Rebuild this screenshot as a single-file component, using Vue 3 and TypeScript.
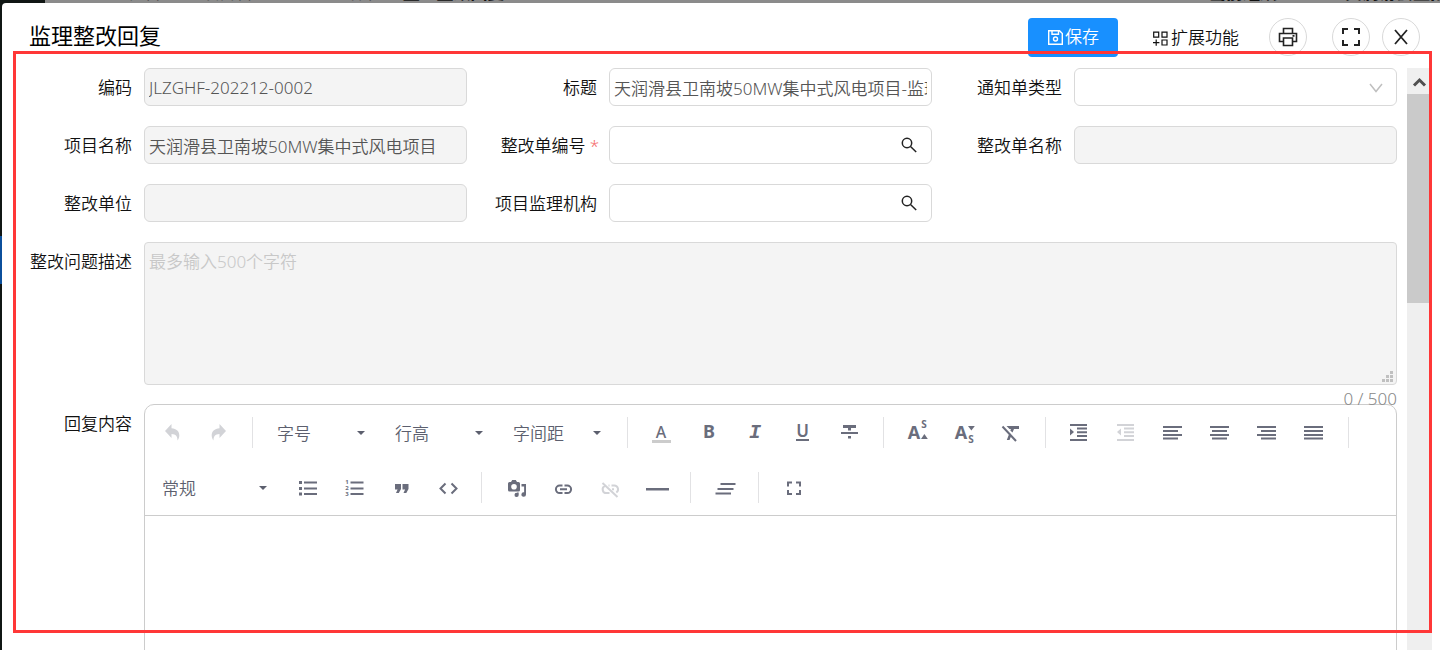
<script setup lang="ts">
import { ref } from 'vue'

interface Glyph { char: string; x: number; y: number; cls: string }
interface Tool {
  kind: 'button' | 'select' | 'divider'
  label?: string
  width?: 'wide' | 'normal'
  disabled?: boolean
  fill?: string
  soft?: string
  stroke?: string
  thick?: number
  glyphs?: Glyph[]
}

const code = ref('JLZGHF-202212-0002')
const title = ref('天润滑县卫南坡50MW集中式风电项目-监理整改回复')
const project = ref('天润滑县卫南坡50MW集中式风电项目')
const noticeType = ref('')
const orderNo = ref('')
const orderName = ref('')
const unit = ref('')
const agency = ref('')
const problem = ref('')

const divider: Tool = { kind: 'divider' }

const firstRow: Tool[] = [
  { kind: 'button', label: '撤销', disabled: true, fill: 'M11.500 3v4.200c5 .3 8 3.300 7.800 7.300 0 2-.8 3.800-1.800 5 .2-4-1.600-6.500-6-6.600v4L5 10z' },
  { kind: 'button', label: '重做', disabled: true, fill: 'M12.500 3v4.200c-5 .3-8 3.300-7.800 7.300 0 2 .8 3.800 1.800 5-.2-4 1.600-6.500 6-6.600v4L19 10z' },
  divider,
  { kind: 'select', label: '字号' },
  { kind: 'select', label: '行高' },
  { kind: 'select', label: '字间距' },
  divider,
  { kind: 'button', label: '文字颜色', soft: 'M2 19h19v3H2z', glyphs: [{ char: 'A', x: 11, y: 17, cls: 'g-regular' }] },
  { kind: 'button', label: '加粗', glyphs: [{ char: 'B', x: 12, y: 17, cls: 'g-bold' }] },
  { kind: 'button', label: '斜体', glyphs: [{ char: 'I', x: 11, y: 17, cls: 'g-italic' }] },
  { kind: 'button', label: '下划线', fill: 'M5 18h13v2H5z', glyphs: [{ char: 'U', x: 11.5, y: 16, cls: 'g-under' }] },
  { kind: 'button', label: '删除线', fill: 'M5 4h13v3h-5v2.500h-3V7H5zM3 11h17v2H3zM10 15h3v2.500h-3z' },
  divider,
  { kind: 'button', label: '上标', fill: 'M15 18l3.400-5 3.400 5z', glyphs: [{ char: 'A', x: 8, y: 18, cls: 'g-bold' }, { char: 'S', x: 18, y: 7, cls: 'g-small' }] },
  { kind: 'button', label: '下标', fill: 'M15 5h6.800l-3.400 4.500z', glyphs: [{ char: 'A', x: 8, y: 18, cls: 'g-bold' }, { char: 'S', x: 18, y: 22, cls: 'g-small' }] },
  { kind: 'button', label: '清除格式', fill: 'M6.500 5H19v3h-5l-1.500 3.500-2.200-2L11 8h-1.500zM9.500 12l2 2.200-2 4.800H6.800z', stroke: 'M2.500 5.500L16 20', thick: 2 },
  divider,
  { kind: 'button', label: '增加缩进', fill: 'M2 7.500l4 3.500-4 3.500z', stroke: 'M2 4h17M9 7.500h10M9 11.300h10M9 15h10M2 19h17', thick: 2 },
  { kind: 'button', label: '减少缩进', disabled: true, fill: 'M6 7.500L2 11l4 3.500z', stroke: 'M2 4h17M9 7.500h10M9 11.300h10M9 15h10M2 19h17', thick: 2 },
  { kind: 'button', label: '左对齐', stroke: 'M1 6h19M1 10h15M1 14h19M1 17.500h15', thick: 2 },
  { kind: 'button', label: '居中', stroke: 'M1 6h19M3 10h15M1 14h19M3 17.500h15', thick: 2 },
  { kind: 'button', label: '右对齐', stroke: 'M1 6h19M5 10h15M1 14h19M5 17.500h15', thick: 2 },
  { kind: 'button', label: '两端对齐', stroke: 'M1 6h19M1 10h19M1 14h19M1 17.500h19', thick: 2 },
  divider,
]

const secondRow: Tool[] = [
  { kind: 'select', label: '常规', width: 'wide' },
  { kind: 'button', label: '无序列表', fill: 'M4 5h3v3H4zM4 11h3v3H4zM4 16.500h3v3H4z', stroke: 'M9 6.500h13M9 12.500h13M9 18h13', thick: 2 },
  { kind: 'button', label: '有序列表', stroke: 'M8.500 6.500h13M8.500 12.500h13M8.500 18h13', thick: 2, glyphs: [{ char: '1', x: 5, y: 8, cls: 'g-digit' }, { char: '2', x: 5, y: 14, cls: 'g-digit' }, { char: '3', x: 5, y: 20, cls: 'g-digit' }] },
  { kind: 'button', label: '引用', fill: 'M6 8h6v5l-2.200 4H7l1.600-3.500H6zM13.500 8h6v5l-2.200 4h-2.800l1.600-3.500h-2.600z' },
  { kind: 'button', label: '代码', stroke: 'M9.500 7.500l-5 5 5 5M15.500 7.500l5 5-5 5', thick: 2 },
  divider,
  { kind: 'button', label: '媒体', fill: 'M7 6l1.200-2h3.600L13 6h1.500q1.500 0 1.500 1.500V14q0 1.500-1.500 1.500h-9Q4 15.500 4 14V7.500Q4 6 5.500 6zM10 7.900a2.800 2.800 0 1 0 0 5.600 2.800 2.800 0 0 0 0-5.600zM17.500 8H22v10.500a2.300 2.300 0 1 1-1.900-2.200V10.500h-2.600zM13 16.500h1.700v2.400a2.100 2.100 0 1 1-1.700-2z' },
  { kind: 'button', label: '链接', stroke: 'M11.500 9.500H8.700a3.800 3.800 0 0 0 0 7.600h2.800M13.500 9.500h2.800a3.800 3.800 0 0 1 0 7.600h-2.800M9 13.300h7', thick: 2 },
  { kind: 'button', label: '取消链接', disabled: true, stroke: 'M7 9.800a3.800 3.800 0 0 0 1.700 7.300h2.800M10.500 9.500h1M13.500 9.500h2.800a3.800 3.800 0 0 1 2 7M14 13.300h2M4.500 7L19.500 21', thick: 2 },
  { kind: 'button', label: '分割线', fill: 'M1 12h23v2.500H1z' },
  divider,
  { kind: 'button', label: '段落', stroke: 'M7.500 8h15M4.500 13h16M2.500 17.500h15.500', thick: 2 },
  divider,
  { kind: 'button', label: '全屏', stroke: 'M7 10.500v-4h4M15 6.500h4v4M19 14v4h-4M11 18H7v-4', thick: 2 },
]

const toolbar = [firstRow, secondRow]
</script>

<template>
  <div class="page">
    <div class="backdrop-top" aria-hidden="true">
      <div class="crumbs">
        <span class="crumb-icon">▦</span><span>/</span><span>工程管理</span><span>/</span><span>项目管理</span><span>/</span><span>监理整改单</span><span>/</span><b>监理整改回复</b>
      </div>
      <div class="org"><b>▦ 当前组织</b><b>天润滑县卫南坡</b></div>
    </div>
    <div class="backdrop-side"><i></i></div>

    <section class="modal" role="dialog" aria-labelledby="dlg-title">
      <header class="head">
        <h1 id="dlg-title">监理整改回复</h1>
        <button class="save" type="button">
          <svg width="17" height="17" viewBox="0 0 17 17" fill="none" stroke="currentColor" stroke-width="1.400">
            <path d="M1.700 1.700h10.800l2.800 2.800v10.800H1.700zM5 1.700v3.600h6.500V1.700" /><circle cx="8.500" cy="10" r="2" />
          </svg>保存
        </button>
        <button class="extend" type="button">
          <svg width="17" height="17" viewBox="0 0 17 17" fill="none" stroke="currentColor" stroke-width="1.200">
            <path d="M1.700 2.200h5v5h-5zM10 2.200h5v5h-5zM10 10h5v5h-5zM4.200 9.500v6.200M1 12.600h6.400" />
          </svg>扩展功能
        </button>
        <button class="round print" type="button" aria-label="打印">
          <svg width="20" height="20" viewBox="0 0 20 20" fill="none" stroke="currentColor" stroke-width="1.600">
            <path d="M5.500 6.500v-5h9v5M5.500 14.500H1.500v-8h17v8h-4M5.500 11h9v7.500h-9zM14.500 8.900h2" />
          </svg>
        </button>
        <button class="round full" type="button" aria-label="全屏">
          <svg width="20" height="20" viewBox="0 0 20 20" fill="none" stroke="currentColor" stroke-width="2">
            <path d="M2 7V2h5M13 2h5v5M18 13v5h-5M7 18H2v-5" />
          </svg>
        </button>
        <button class="round" type="button" aria-label="关闭">
          <svg width="20" height="20" viewBox="0 0 20 20" fill="none" stroke="currentColor" stroke-width="1.800">
            <path d="M4 3l12 14M16 3L4 17" />
          </svg>
        </button>
      </header>

      <div class="body">
        <form class="form" @submit.prevent>
          <div class="field"><label for="f-code">编码</label><input id="f-code" v-model="code" disabled /></div>
          <div class="field"><label for="f-title">标题</label><input id="f-title" v-model="title" /></div>
          <div class="field">
            <label for="f-type">通知单类型</label>
            <div class="control">
              <select id="f-type" v-model="noticeType"><option value=""></option></select>
              <svg class="mark chevron" width="14" height="10" viewBox="0 0 14 10" fill="none" stroke="#bfbfbf" stroke-width="1.500"><path d="M1 1l6 7.500L13 1" /></svg>
            </div>
          </div>
          <div class="field"><label for="f-project">项目名称</label><input id="f-project" v-model="project" disabled /></div>
          <div class="field">
            <label for="f-no" class="required">整改单编号<em>*</em></label>
            <div class="control">
              <input id="f-no" v-model="orderNo" />
              <button class="mark find" type="button" aria-label="选择整改单">
                <svg width="16" height="16" viewBox="0 0 16 16" fill="none" stroke="currentColor" stroke-width="1.500"><circle cx="6" cy="6" r="4.700" /><path d="M9.500 9.500l5.700 5.500" /></svg>
              </button>
            </div>
          </div>
          <div class="field"><label for="f-name">整改单名称</label><input id="f-name" v-model="orderName" disabled /></div>
          <div class="field"><label for="f-unit">整改单位</label><input id="f-unit" v-model="unit" disabled /></div>
          <div class="field">
            <label for="f-agency">项目监理机构</label>
            <div class="control">
              <input id="f-agency" v-model="agency" />
              <button class="mark find" type="button" aria-label="选择监理机构">
                <svg width="16" height="16" viewBox="0 0 16 16" fill="none" stroke="currentColor" stroke-width="1.500"><circle cx="6" cy="6" r="4.700" /><path d="M9.500 9.500l5.700 5.500" /></svg>
              </button>
            </div>
          </div>

          <div class="field whole">
            <label for="f-problem">整改问题描述</label>
            <div class="control">
              <textarea id="f-problem" v-model="problem" placeholder="最多输入500个字符" disabled></textarea>
              <svg class="grip" width="11" height="11" viewBox="0 0 11 11" fill="#c0c0c0"><path d="M8 0h3v3H8zM4 4h3v3H4zM8 4h3v3H8zM0 8h3v3H0zM4 8h3v3H4zM8 8h3v3H8z" /></svg>
              <div class="count">{{ problem.length }} / 500</div>
            </div>
          </div>

          <div class="field whole reply">
            <label id="reply-label">回复内容</label>
            <div class="editor">
              <div class="toolbar" role="toolbar" aria-label="编辑工具">
                <div v-for="(row, r) in toolbar" :key="r" class="row">
                  <template v-for="(tool, i) in row" :key="i">
                    <span v-if="tool.kind === 'divider'" class="divider"></span>
                    <span v-else-if="tool.kind === 'select'" class="drop" :class="tool.width">
                      <select :aria-label="tool.label"><option>{{ tool.label }}</option></select>
                      <svg class="mark caret" width="8" height="4" viewBox="0 0 8 4" fill="currentColor"><path d="M0 0h8L4 4z" /></svg>
                    </span>
                    <button v-else class="tool" type="button" :aria-label="tool.label" :disabled="tool.disabled">
                      <svg width="24" height="24" viewBox="0 0 24 24" overflow="visible">
                        <path v-if="tool.soft" :d="tool.soft" fill="#cccccc" />
                        <path v-if="tool.fill" :d="tool.fill" fill="currentColor" fill-rule="evenodd" />
                        <path v-if="tool.stroke" :d="tool.stroke" fill="none" stroke="currentColor" :stroke-width="tool.thick" />
                        <text v-for="g in tool.glyphs" :key="g.y" :x="g.x" :y="g.y" :class="g.cls" text-anchor="middle" fill="currentColor">{{ g.char }}</text>
                      </svg>
                    </button>
                  </template>
                </div>
              </div>
              <div class="content" contenteditable="true" role="textbox" aria-labelledby="reply-label"></div>
            </div>
          </div>
        </form>

        <div class="scroll" aria-hidden="true">
          <div class="scroll-up">
            <svg width="16" height="10" viewBox="0 0 16 10" fill="none" stroke="#505050" stroke-width="3"><path d="M2 8.500l5.500-5.500L13 8.500" /></svg>
          </div>
          <div class="thumb"></div>
        </div>
      </div>
    </section>

    <div class="frame" aria-hidden="true"></div>
  </div>
</template>

<style>
body { margin: 0; }
</style>

<style scoped>
* { box-sizing: border-box; }
.page {
  position: relative;
  display: grid;
  grid-template: 3px minmax(0, 1fr) / 2px minmax(0, 1fr);
  height: 100vh;
  overflow: hidden;
  background: #101614;
  color: #111;
  font: 350 17px/26px "Noto Sans", "Noto Sans CJK SC", sans-serif;
}
button, input, select, textarea { font: inherit; color: inherit; margin: 0; }
button { background: none; border: 0; padding: 0; display: flex; align-items: center; justify-content: center; cursor: pointer; }
svg { display: block; flex: none; }

.backdrop-top {
  grid-column: 1 / -1;
  display: flex;
  align-items: flex-end;
  justify-content: space-between;
  overflow: hidden;
  margin-left: 45px;
  padding: 0 0 0 24px;
  background: #8b8b8b;
  color: #444;
  line-height: 20px;
  white-space: nowrap;
}
.crumbs { display: flex; gap: 9px; }
.crumbs b, .org { color: #111; font-weight: 700; }
.org { display: flex; gap: 68px; margin-right: -24px; }
.backdrop-side { padding-top: 233px; }
.backdrop-side i { display: block; height: 48px; background: #0b4f9c; }

.modal { display: flex; flex-direction: column; min-height: 0; background: #fff; border-top-left-radius: 4px; z-index: 1; }
.head { display: flex; align-items: center; height: 65px; padding: 3px 20px 0 27px; flex: none; }
h1 { flex: 1; margin: 0; padding-bottom: 4px; font-size: 22px; font-weight: 400; line-height: 32px; color: #000; }
.save { gap: 1px; width: 90px; height: 39px; border-radius: 4px; background: #1890ff; color: #fff; }
.extend { gap: 2px; margin: 0 30px 0 34px; padding-top: 2px; color: #111; }
.round { width: 38px; height: 38px; border: 1px solid #d9d9d9; border-radius: 50%; background: #fff; color: #222; }
.print { margin-right: 25px; }
.full { margin-right: 12px; }

.body { flex: 1; display: flex; gap: 10px; min-height: 0; padding-right: 8px; overflow: hidden; }
.form {
  flex: 1;
  min-width: 0;
  display: grid;
  grid-template-columns: repeat(3, minmax(0, 1fr));
  row-gap: 20px;
  align-content: start;
}
.field { display: flex; min-width: 0; }
.whole { grid-column: 1 / -1; }
.field > label { flex: none; width: 142px; height: 38px; padding-right: 12px; line-height: 40px; text-align: right; }
.field > .required { padding-right: 10px; }
em { margin-left: 4px; color: #f56c6c; font-style: normal; }
.field > input, .control, .editor { flex: 1; min-width: 0; }
.control { position: relative; }
input, .control select {
  display: block;
  width: 100%;
  height: 38px;
  padding: 0 4px;
  border: 1px solid #d9d9d9;
  border-radius: 6px;
  background: #fff;
  color: #555;
}
select { appearance: none; outline: none; }
input:disabled, textarea:disabled { background: #f4f4f4; color: #555; opacity: 1; }
.mark { position: absolute; pointer-events: none; }
.chevron { right: 14px; top: 15px; }
.find { right: 15px; top: 11px; pointer-events: auto; color: #222; }
textarea {
  display: block;
  width: 100%;
  height: 143px;
  padding: 6px 4px;
  border: 1px solid #d9d9d9;
  border-radius: 4px;
  resize: none;
}
textarea::placeholder { color: #c8c8c8; opacity: 1; }
.grip { position: absolute; right: 4px; top: 129px; }
.count { height: 19px; line-height: 28px; text-align: right; color: #888; }
.reply { margin-top: -20px; }

.editor { height: 420px; border: 1px solid #ccc; border-radius: 10px; color: #5c5f6e; }
.toolbar { padding: 0 3px; border-bottom: 1px solid #ccc; }
.row { display: flex; align-items: center; height: 55px; }
.divider { flex: none; width: 1px; height: 31px; margin: 0 10px; background: #e2e2e4; }
.drop { position: relative; flex: none; width: 118px; height: 38px; }
.drop select { width: 100%; height: 38px; padding: 2px 30px 0 14px; border: 0; background: none; }
.drop.wide { width: 135px; }
.caret { right: 16px; top: 17px; }
.tool { flex: none; width: 47px; height: 38px; color: #6a6d7c; }
.tool:disabled { color: #d2d3d7; cursor: default; }
.content { min-height: 200px; outline: none; }
text { font-family: "Noto Sans", sans-serif; }
.g-regular { font-size: 16px; font-weight: 500; }
.g-bold { font-size: 18px; font-weight: 700; }
.g-italic { font: italic 700 20px "Liberation Mono", monospace; }
.g-under { font-size: 17px; font-weight: 600; }
.g-small { font-size: 10px; font-weight: 700; }
.g-digit { font-size: 6px; font-weight: 700; }

.scroll { flex: none; width: 25px; background: #efefef; }
.scroll-up { display: flex; align-items: center; justify-content: center; height: 26px; padding-top: 2px; }
.thumb { height: 209px; background: #cacaca; }

.frame { position: absolute; inset: 51px 8px 17px 13px; border: 3px solid #ff3737; pointer-events: none; z-index: 2; }
</style>
